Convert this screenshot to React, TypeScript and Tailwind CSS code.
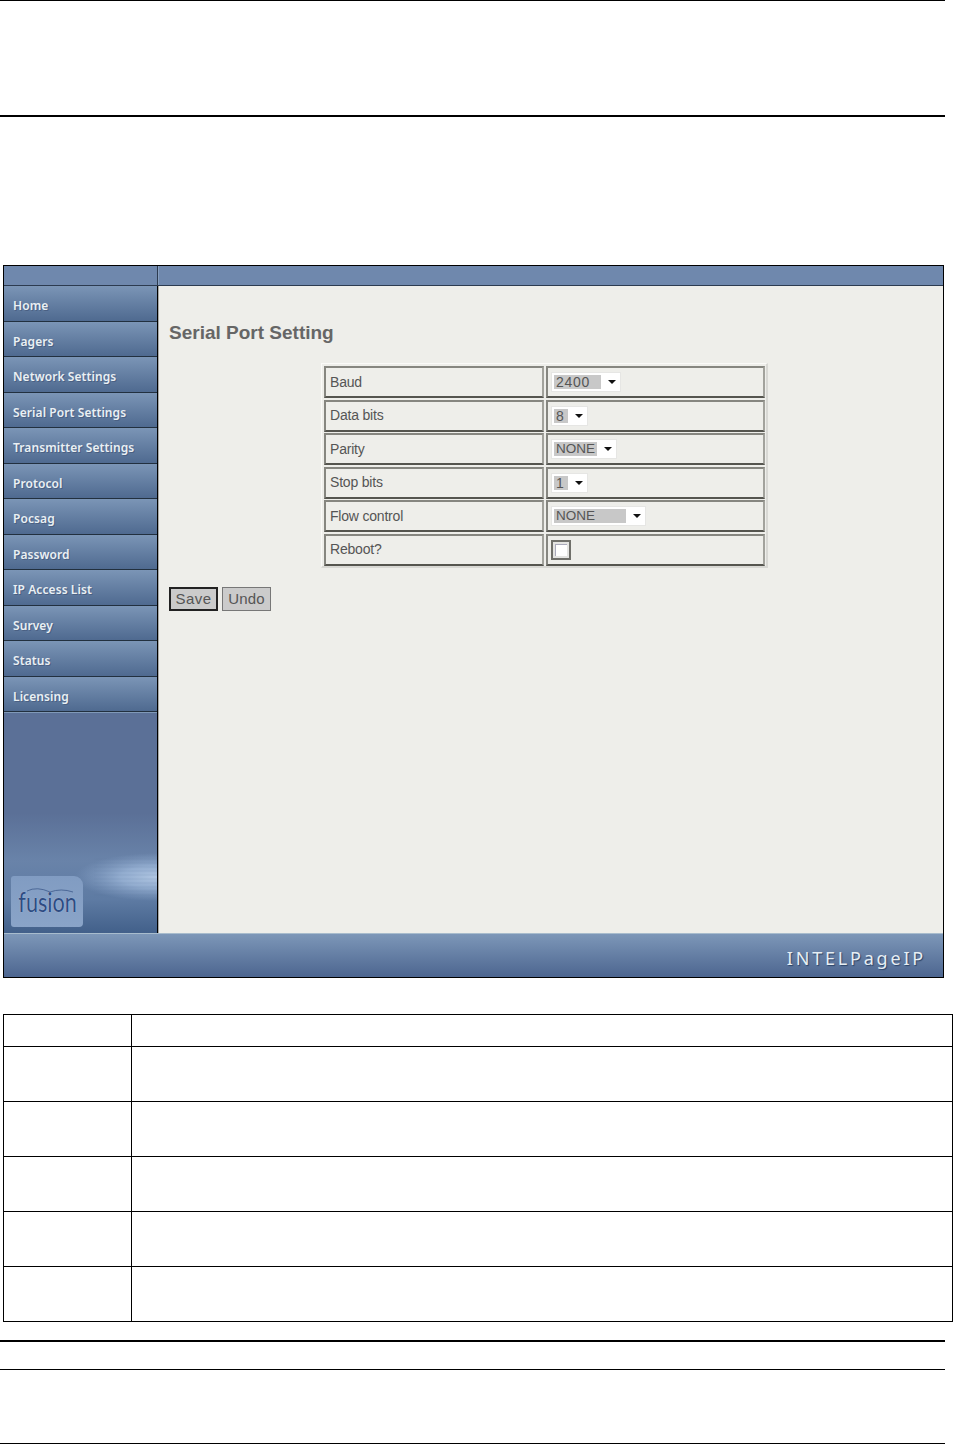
const navItems = [
  "Home",
  "Pagers",
  "Network Settings",
  "Serial Port Settings",
  "Transmitter Settings",
  "Protocol",
  "Pocsag",
  "Password",
  "IP Access List",
  "Survey",
  "Status",
  "Licensing",
];

const rows = [
  { label: "Baud", value: "2400", selectW: "w-[47px]", boxW: "w-[70px]", tight: false },
  { label: "Data bits", value: "8", selectW: "w-[14px]", boxW: "w-[37px]", tight: false },
  { label: "Parity", value: "NONE", selectW: "w-[43px]", boxW: "w-[66px]", tight: true },
  { label: "Stop bits", value: "1", selectW: "w-[14px]", boxW: "w-[37px]", tight: false },
  { label: "Flow control", value: "NONE", selectW: "w-[72px]", boxW: "w-[95px]", tight: true },
];

function Select({ value, selectW, boxW, tight }: { value: string; selectW: string; boxW: string; tight: boolean }) {
  return (
    <div className={`${boxW} h-[20px] flex items-center bg-white border border-[#e6e6e4] pl-[2px]`}>
      <span className={`${selectW} ${tight ? "text-[13.5px]" : "text-[14px] tracking-[0.7px]"} h-[14px] bg-[#c8c8c8] pl-[2px] leading-[14px] text-[#555]`}>
        {value}
      </span>
      <svg width="8" height="4" viewBox="0 0 8 4" className="ml-auto mr-[4px]">
        <path d="M0 0h8L4 4z" fill="#111" />
      </svg>
    </div>
  );
}

function Cell({ className, children }: { className: string; children: React.ReactNode }) {
  return (
    <div className={`${className} h-[32px] flex items-center border-2 border-[#868680] border-b-[#55554f] border-r-[#a2a29c]`}>
      {children}
    </div>
  );
}

function FormTable() {
  return (
    <div className="w-[447px] ml-[152px] mt-[18px] flex flex-col gap-[1.5px] pt-[2.4px] pl-[2px] border-r-2 border-b-2 border-[#d8d8d4] border-l border-t border-l-[#fafaf8] border-t-[#fafaf8]">
      {rows.map((r) => (
        <div key={r.label} className="flex gap-[2px]">
          <Cell className="w-[220px] pl-[4px] text-[14px] tracking-[-0.2px] text-[#555]">{r.label}</Cell>
          <Cell className="w-[219px] pl-[3px]">
            <Select value={r.value} selectW={r.selectW} boxW={r.boxW} tight={r.tight} />
          </Cell>
        </div>
      ))}
      <div className="flex gap-[2px]">
        <Cell className="w-[220px] pl-[4px] text-[14px] tracking-[-0.2px] text-[#555]">Reboot?</Cell>
        <Cell className="w-[219px] pl-[3px]">
          <div className="w-[20px] h-[20px] border-2 border-[#6f6f6a] bg-[#e4e4e2] p-[2px]">
            <div className="w-full h-full bg-white border-l border-t border-[#aab]" />
          </div>
        </Cell>
      </div>
    </div>
  );
}

function SidebarArt() {
  return (
    <svg className="absolute left-0 bottom-0" width="153" height="120" viewBox="0 0 153 120" preserveAspectRatio="none">
      <defs>
        <linearGradient id="fade" x1="0" y1="0" x2="0" y2="1">
          <stop offset="0" stopColor="#5b7097" />
          <stop offset="0.4" stopColor="#6983a9" />
          <stop offset="0.72" stopColor="#5e7ba3" />
          <stop offset="1" stopColor="#42608a" />
        </linearGradient>
        <radialGradient id="shine">
          <stop offset="0" stopColor="#b0c6e2" />
          <stop offset="0.45" stopColor="#9ab4d6" stopOpacity="0.85" />
          <stop offset="1" stopColor="#8ba6cb" stopOpacity="0" />
        </radialGradient>
      </defs>
      <rect width="153" height="120" fill="url(#fade)" />
      <ellipse cx="153" cy="64" rx="82" ry="24" fill="url(#shine)" />
      {[46, 50, 54, 58, 62, 66, 70, 74, 78, 82].map((y) => (
        <line key={y} x1="90" x2="153" y1={y} y2={y} stroke="#5e7ba3" strokeOpacity="0.15" />
      ))}
    </svg>
  );
}

function Sidebar() {
  return (
    <div className="w-[154px] flex flex-col border-r border-black">
      {navItems.map((item) => (
        <div
          key={item}
          className="h-[35.5px] shrink-0 flex items-end pb-[6.4px] pl-[9px] border-b border-[#22303f] bg-gradient-to-b from-[#7b95b6] to-[#4f6a90] text-[12px] leading-[16px] font-semibold text-[#eaf0f4] font-['Noto_Sans',sans-serif] [text-shadow:1px_1px_0_#4a6083]"
        >
          <span className="tracking-[0.08px]">{item}</span>
        </div>
      ))}
      <div className="relative flex-1 bg-[#5b7097] border-t border-[#8099b8] overflow-hidden">
        <SidebarArt />
        <div className="absolute left-[7px] bottom-[6px] w-[72px] h-[51px] rounded-tr-[9px] rounded-bl-[3px] rounded-tl-[3px] rounded-br-[4px] bg-gradient-to-b from-[#819cc2] to-[#8aa4c8] flex items-start justify-center overflow-hidden">
          <svg className="absolute left-[14px] top-[10px]" width="50" height="10" viewBox="0 0 50 10">
            <path d="M2 5Q12 0 25 6Q36 2 48 6" fill="none" stroke="#3d5a8c" strokeWidth="0.8" />
          </svg>
          <span className="mt-[12px] ml-[1px] scale-x-[0.8] text-[27px] leading-[28px] text-[#2e4c82] font-['Lato',sans-serif] font-normal [text-shadow:0_0_1px_#c4d4e8]">
            fusion
          </span>
        </div>
      </div>
    </div>
  );
}

function Screenshot() {
  return (
    <div className="ml-[3px] mt-[148px] w-[941px] h-[713px] border border-black flex flex-col font-['Liberation_Sans',sans-serif]">
      <div className="h-[20px] shrink-0 flex bg-[#6f88ad] border-b border-[#2c3b50]">
        <div className="w-[154px] border-r border-[#2c3b50]" />
        <div className="flex-1 border-l border-[#88a0c0]" />
      </div>
      <div className="h-[647px] shrink-0 flex">
        <Sidebar />
        <div className="flex-1 bg-[#eeeeea] border-l border-[#a9a9a6] pl-[10px] pt-[35px]">
          <h1 className="text-[19px] leading-[24px] font-bold text-[#666]">Serial Port Setting</h1>
          <FormTable />
          <div className="flex gap-[4px] mt-[19px]">
            <div className="w-[49px] h-[24px] border-2 border-[#222] bg-[#cbcbcb] text-[15px] leading-[20px] tracking-[0.4px] text-[#555] text-center">Save</div>
            <div className="w-[49px] h-[24px] border border-[#777] bg-[#cbcbcb] text-[15px] leading-[22px] tracking-[0.1px] text-[#555] text-center">Undo</div>
          </div>
        </div>
      </div>
      <div className="flex-1 flex items-center justify-end pr-[17px] pt-[5px] bg-gradient-to-b from-[#7d97b8] to-[#4d6690] border-t border-[#a8bccd] text-[18px] tracking-[2.8px] text-[#e6eef4] font-['Noto_Sans',sans-serif] [text-shadow:1px_1px_1px_#2c4468]">
        INTELPageIP
      </div>
    </div>
  );
}

function EmptyTable() {
  return (
    <div className="ml-[3px] mt-[36px] w-[950px] h-[308px] border-t-[1px] border-l border-black grid grid-cols-[128px_1fr] grid-rows-[32px_repeat(5,55px)]">
      {Array.from({ length: 12 }).map((_, i) => (
        <div key={i} className="border-r border-b border-black" />
      ))}
    </div>
  );
}

export default function App() {
  return (
    <div className="w-[953px] h-[1444px] bg-white overflow-hidden">
      <div className="w-[945px] h-px bg-black" />
      <div className="w-[945px] h-[2px] bg-black mt-[114px]" />
      <Screenshot />
      <EmptyTable />
      <div className="w-[945px] h-[2px] bg-black mt-[18px]" />
      <div className="w-[945px] h-px bg-black mt-[27px]" />
      <div className="w-[945px] h-px bg-black mt-[73px]" />
    </div>
  );
}
